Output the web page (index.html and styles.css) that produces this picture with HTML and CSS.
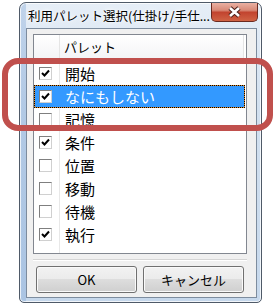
FILE: index.html
```html
<!DOCTYPE html>
<html lang="ja">
<head>
<meta charset="utf-8">
<title>利用パレット選択</title>
<link rel="stylesheet" href="styles.css">
</head>
<body>
<div class="window">
  <div class="titlebar">
    <span class="title">利用パレット選択(仕掛け/手仕...</span>
    <div class="close">
      <svg width="15" height="12" viewBox="0 0 15 12"><path d="M3 2 L12 10 M12 2 L3 10" stroke="#4a1f18" stroke-width="4.6" fill="none"/><path d="M3 2 L12 10 M12 2 L3 10" stroke="#fff" stroke-width="2.6" fill="none"/></svg>
    </div>
  </div>
  <div class="client">
    <div class="listview">
      <div class="header">
        <div class="hcell chk"></div>
        <div class="hcell name">パレット</div>
      </div>
      <div class="rows">
        <div class="row"><span class="cb"><svg viewBox="0 0 11 11" width="11" height="11"><path d="M2 5 L4.5 7.5 L9 2.5" stroke="#000" stroke-width="2" fill="none"/></svg></span><span class="label">開始</span></div>
        <div class="row sel"><span class="cb"><svg viewBox="0 0 11 11" width="11" height="11"><path d="M2 5 L4.5 7.5 L9 2.5" stroke="#000" stroke-width="2" fill="none"/></svg></span><span class="label">なにもしない</span></div>
        <div class="row"><span class="cb"></span><span class="label">記憶</span></div>
        <div class="row"><span class="cb"><svg viewBox="0 0 11 11" width="11" height="11"><path d="M2 5 L4.5 7.5 L9 2.5" stroke="#000" stroke-width="2" fill="none"/></svg></span><span class="label">条件</span></div>
        <div class="row"><span class="cb"></span><span class="label">位置</span></div>
        <div class="row"><span class="cb"></span><span class="label">移動</span></div>
        <div class="row"><span class="cb"></span><span class="label">待機</span></div>
        <div class="row"><span class="cb"><svg viewBox="0 0 11 11" width="11" height="11"><path d="M2 5 L4.5 7.5 L9 2.5" stroke="#000" stroke-width="2" fill="none"/></svg></span><span class="label">執行</span></div>
      </div>
    </div>
    <div class="sep"></div>
    <div class="buttons">
      <button class="btn">OK</button>
      <button class="btn">キャンセル</button>
    </div>
  </div>
</div>
<div class="annotation"></div>
</body>
</html>
```
FILE: styles.css
```css
html, body {
  margin: 0;
  padding: 0;
}
body {
  width: 275px;
  height: 306px;
  background: #fff;
  position: relative;
  overflow: hidden;
  font-family: "Noto Sans CJK JP", "Noto Sans", sans-serif;
  color: #000;
}
.window {
  box-sizing: border-box;
  margin: 2px 0 0 19px;
  width: 243px;
  height: 301px;
  border: 1px solid #4f5a68;
  border-radius: 7px 7px 5px 5px;
  background:
    linear-gradient(to right, rgba(120,160,210,0.35) 0, rgba(120,160,210,0.35) 6px, rgba(0,0,0,0) 6px),
    linear-gradient(to bottom, #e6eef7 0%, #d2e0ef 35%, #c6d8ec 100%);
  box-shadow: inset 0 0 0 1px rgba(255,255,255,0.75);
  display: flex;
  flex-direction: column;
  padding: 0 4px 4px 6px;
}
.titlebar {
  height: 25px;
  flex-shrink: 0;
  display: flex;
  align-items: flex-start;
}
.title {
  font-size: 12.5px;
  line-height: 1;
  padding: 7px 0 0 2px;
  white-space: nowrap;
  text-shadow: 0 0 6px #fff, 0 0 3px #fff;
}
.close {
  box-sizing: border-box;
  margin-left: auto;
  margin-right: -1px;
  width: 47px;
  height: 19px;
  border: 1px solid #6a2a20;
  border-top: none;
  border-radius: 0 0 5px 5px;
  background: linear-gradient(#eab0a2 0%, #d98a78 40%, #c2442f 52%, #cf6345 100%);
  display: flex;
  align-items: center;
  justify-content: center;
}
.client {
  flex: 1;
  border: 1px solid #7d8c9e;
  background: #f0f0f0;
  display: flex;
  flex-direction: column;
  padding: 5px 9px 4px 6px;
}
.listview {
  height: 220px;
  box-sizing: border-box;
  border: 1px solid #828790;
  background: #fff;
  display: flex;
  flex-direction: column;
}
.header {
  height: 24px;
  flex-shrink: 0;
  display: flex;
  background: linear-gradient(#ffffff, #f3f4f6);
  border-bottom: 1px solid #d5d5d5;
  margin-right: 2px;
  border-right: 1px solid #e5e5e5;
}
.hcell.chk {
  width: 25px;
  border-right: 1px solid #e5e5e5;
}
.hcell.name {
  flex: 1;
  padding-left: 4px;
  font-size: 13px;
  line-height: 24px;
}
.rows {
  flex: 1;
  padding-top: 2px;
  display: flex;
  flex-direction: column;
  background: linear-gradient(to right, rgba(0,0,0,0) 25px, #e8e8e8 25px, #e8e8e8 26px, rgba(0,0,0,0) 26px);
}
.row {
  box-sizing: border-box;
  height: 23px;
  margin-right: 1px;
  border: 1px solid transparent;
  display: flex;
  align-items: center;
  font-size: 15px;
}
.row.sel {
  border: 1px dotted #000;
  background: linear-gradient(#3399ff, #3399ff) padding-box, linear-gradient(#e08a2a, #e08a2a) border-box;
  color: #fff;
}
.cb {
  box-sizing: border-box;
  width: 13px;
  height: 13px;
  margin-left: 4px;
  border: 1px solid;
  border-color: #7f7f7f #d0d0d0 #d0d0d0 #7f7f7f;
  background: #fff;
  display: flex;
  align-items: center;
  justify-content: center;
}
.label {
  margin-left: 13px;
  line-height: 1;
}
.sep {
  height: 1px;
  margin-top: 5px;
  background: #d5d5d5;
  border-bottom: 1px solid #fff;
}
.buttons {
  margin-top: 5px;
  padding-left: 3px;
  display: flex;
  gap: 6px;
}
.btn {
  width: 101px;
  height: 27px;
  border: 1px solid #707070;
  border-radius: 3px;
  background: linear-gradient(#f2f2f2 0%, #ebebeb 50%, #dddddd 50%, #cfcfcf 100%);
  box-shadow: inset 0 0 0 1px #fafafa;
  font-family: "Noto Sans CJK JP", "Noto Sans", sans-serif;
  font-size: 13px;
  color: #000;
  padding: 0;
}
.annotation {
  position: absolute;
  left: 2px;
  top: 58px;
  width: 271px;
  height: 73px;
  box-sizing: border-box;
  border: 6px solid #c0504d;
  border-radius: 16px;
}
```
